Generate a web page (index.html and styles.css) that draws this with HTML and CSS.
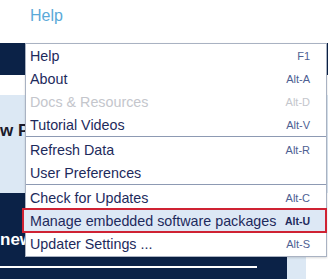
FILE: index.html
```html
<!DOCTYPE html>
<html lang="en">
<head>
    <meta charset="UTF-8">
    <meta name="viewport" content="width=device-width, initial-scale=1.0">
    <title>Help Menu</title>
    <link rel="stylesheet" href="styles.css">
</head>
<body>
    <header class="top-bar">
        <span class="top-link">Help</span>
    </header>

    <div class="page">
        <div class="banner"></div>
        <div class="gap"></div>
        <section class="promo">
            <h2 class="promo-title">w Products</h2>
        </section>
        <div class="lower">
            <section class="news">
                <h2 class="news-title">news</h2>
                <hr class="news-rule">
                <p class="news-text">Next Manual Install from MH</p>
            </section>
            <div class="side-strip"></div>
        </div>
    </div>

    <ul class="menu">
        <li class="menu-item"><span>Help</span><span class="key">F1</span></li>
        <li class="menu-item"><span>About</span><span class="key">Alt-A</span></li>
        <li class="menu-item disabled"><span>Docs &amp; Resources</span><span class="key">Alt-D</span></li>
        <li class="menu-item"><span>Tutorial Videos</span><span class="key">Alt-V</span></li>
        <li class="menu-sep"></li>
        <li class="menu-item"><span>Refresh Data</span><span class="key">Alt-R</span></li>
        <li class="menu-item"><span>User Preferences</span><span class="key"></span></li>
        <li class="menu-sep"></li>
        <li class="menu-item"><span>Check for Updates</span><span class="key">Alt-C</span></li>
        <li class="menu-item active"><span>Manage embedded software packages</span><span class="key">Alt-U</span></li>
        <li class="menu-item"><span>Updater Settings ...</span><span class="key">Alt-S</span></li>
    </ul>
</body>
</html>
```

FILE: styles.css
```css
* {
    margin: 0;
    padding: 0;
    box-sizing: border-box;
}

body {
    font-family: 'Liberation Sans', Arial, sans-serif;
    width: 328px;
    height: 279px;
    overflow: hidden;
    position: relative;
    background: #ffffff;
}

.top-bar {
    height: 43px;
    padding: 7px 0 0 30px;
}

.top-link {
    color: #5aa9d8;
    font-size: 16px;
}

.banner {
    height: 32px;
    background: #0b2247;
}

.gap {
    height: 20px;
}

.promo {
    height: 98px;
    background: #dce8f4;
    padding-top: 26px;
}

.promo-title {
    font-size: 17px;
    font-weight: 700;
    color: #1a1a2a;
    white-space: nowrap;
}

.lower {
    display: flex;
    height: 86px;
}

.news {
    width: 287px;
    background: #0b2247;
    color: #ffffff;
    padding-top: 37px;
    overflow: hidden;
}

.news-title {
    font-size: 17px;
    font-weight: 700;
    white-space: nowrap;
}

.news-rule {
    border: none;
    height: 2px;
    width: 257px;
    background: #ffffff;
    margin-top: 16px;
}

.news-text {
    font-size: 15px;
    font-weight: 700;
    margin-top: 8px;
    white-space: nowrap;
}

.side-strip {
    width: 19px;
    background: #dce8f4;
}

/* Dropdown menu */
.menu {
    position: absolute;
    top: 43px;
    left: 25px;
    width: 302px;
    list-style: none;
    background: #ffffff;
    border: 1px solid #a9b2c2;
    padding-bottom: 1px;
    box-shadow: 0 1px 2px rgba(0, 0, 0, 0.15);
}

.menu-item {
    display: flex;
    align-items: center;
    justify-content: space-between;
    height: 23px;
    padding: 0 16px 0 4px;
    font-size: 14.3px;
    color: #1d2a5c;
    white-space: nowrap;
}

.menu-item .key {
    font-size: 11px;
    color: #4e5f93;
}

.menu-item.disabled,
.menu-item.disabled .key {
    color: #c4c6cc;
}

.menu-item.active {
    background: #dde8f5;
    outline: 2px solid #cf2233;
    outline-offset: -1px;
    margin: 0 0 0 -3px;
    padding-left: 7px;
}

.menu-item.active .key {
    color: #1d2a5c;
    font-weight: 700;
    font-size: 10.5px;
}

.menu-sep {
    height: 2px;
    border-top: 1px solid #8d9ab3;
}
```
